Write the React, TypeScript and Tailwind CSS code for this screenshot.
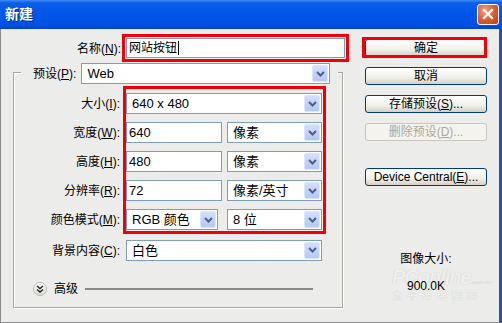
import React from 'react';

const Arrow = () => (
  <span className="w-[16px] h-[17px] mr-[1px] rounded-[2px] border border-[#dbe5fb] bg-[linear-gradient(to_bottom,#d3dffc,#b4c8f5)] flex items-center justify-center">
    <svg width="9" height="6" viewBox="0 0 9 6">
      <polyline points="1,1 4.5,4.5 8,1" fill="none" stroke="#4d6185" strokeWidth="2" />
    </svg>
  </span>
);

const Combo = ({ value, className }: { value: string; className: string }) => (
  <div className={`h-[21px] border border-[#7f9db9] bg-white flex items-center ${className}`}>
    <span className="flex-1 pl-[5px] text-[13px] leading-none whitespace-nowrap">{value}</span>
    <Arrow />
  </div>
);

const Field = ({ value, className }: { value: string; className: string }) => (
  <div className={`h-[21px] border border-[#7f9db9] bg-white flex items-center pl-[2px] text-[13px] leading-none ${className}`}>
    {value}
  </div>
);

const Label = ({ text, k, tail = ':' }: { text: string; k: string; tail?: string }) => (
  <span className="text-[12px] whitespace-nowrap">
    {text}(<span className="underline">{k}</span>){tail}
  </span>
);

const Btn = ({ children, disabled }: { children: React.ReactNode; disabled?: boolean }) => (
  <div
    className={`w-[122px] h-[18px] rounded-[3px] border flex items-center justify-center text-[12px] ${
      disabled
        ? 'border-[#c9c7ba] bg-[#f4f3ee] text-[#aca899]'
        : 'border-[#003c74] bg-[linear-gradient(to_bottom,#ffffff,#f0f0ea_60%,#d6d0c5)] text-black'
    }`}
  >
    {children}
  </div>
);

export default function App() {
  return (
    <div className="w-[502px] h-[323px] flex flex-col overflow-hidden text-black font-['Liberation_Sans','Noto_Sans_CJK_SC',sans-serif]">
      {/* title bar */}
      <div className="h-[29px] shrink-0 flex items-center justify-between pl-[5px] pr-[3px] bg-[linear-gradient(to_bottom,#3d8cf6_0%,#0b5fe9_10%,#0056e6_45%,#0052e2_85%,#0041cb_100%)]">
        <span className="text-white font-bold text-[14px] [text-shadow:1px_1px_0_#0b2a8f]">新建</span>
        <div className="w-[22px] h-[21px] mb-[1px] rounded-[3px] border border-white bg-[radial-gradient(circle_at_35%_30%,#f0a285,#d9572f_55%,#c23d16)] flex items-center justify-center">
          <svg width="12" height="12" viewBox="0 0 12 12">
            <path d="M2 2 L10 10 M10 2 L2 10" stroke="#fff" strokeWidth="2.2" strokeLinecap="square" />
          </svg>
        </div>
      </div>

      {/* body */}
      <div className="flex-1 flex bg-[#ececea] border-l border-b border-[#8c8c8c] border-r-[3px] border-r-[#2b4ea6] relative">
        {/* left */}
        <div className="w-[353px] shrink-0 flex flex-col">
          <div className="mt-[5px] flex items-center">
            <div className="w-[120px] text-right">
              <Label text="名称" k="N" />
            </div>
            <div className="ml-[1px] w-[227px] h-[28px] border-[3px] border-[#f0000b] p-[1px] flex">
              <div className="flex-1 border border-[#7f9db9] bg-white flex items-center pl-[2px] text-[12px]">
                网站按钮<span className="w-px h-[14px] bg-black ml-[1px]" />
              </div>
            </div>
          </div>

          {/* group box */}
          <div className="mt-[10px] ml-[12px] w-[330px] h-[236px] border border-[#a9a89f] shadow-[inset_1px_1px_0_#fff,1px_1px_0_#fff] flex flex-col">
            <div className="-mt-[10px] ml-[7px] w-[317px] h-[21px] bg-[#ececea] flex items-center pl-[12px]">
              <Label text="预设" k="P" />
              <Combo value="Web" className="ml-[5px] w-[249px]" />
            </div>

            <div className="mt-[2px] flex">
              <div className="w-[109px] pr-[3px] pt-[7px] flex flex-col gap-[8px]">
                <div className="h-[21px] flex items-center justify-end"><Label text="大小" k="I" /></div>
                <div className="h-[21px] flex items-center justify-end"><Label text="宽度" k="W" /></div>
                <div className="h-[21px] flex items-center justify-end"><Label text="高度" k="H" /></div>
                <div className="h-[21px] flex items-center justify-end"><Label text="分辨率" k="R" /></div>
                <div className="h-[21px] flex items-center justify-end"><Label text="颜色模式" k="M" /></div>
              </div>
              <div className="w-[203px] border-[3px] border-[#f0000b] pt-[4px] pb-[1px] flex flex-col gap-[8px]">
                <Combo value="640 x 480" className="w-[196px]" />
                <div className="flex gap-[5px]">
                  <Field value="640" className="w-[96px]" />
                  <Combo value="像素" className="w-[95px]" />
                </div>
                <div className="flex gap-[5px]">
                  <Field value="480" className="w-[96px]" />
                  <Combo value="像素" className="w-[95px]" />
                </div>
                <div className="flex gap-[5px]">
                  <Field value="72" className="w-[96px]" />
                  <Combo value="像素/英寸" className="w-[95px]" />
                </div>
                <div className="flex gap-[9px]">
                  <Combo value="RGB 颜色" className="w-[92px]" />
                  <Combo value="8 位" className="w-[95px]" />
                </div>
              </div>
            </div>

            <div className="mt-[4px] flex items-center">
              <div className="w-[109px] pr-[3px] text-right"><Label text="背景内容" k="C" /></div>
              <Combo value="白色" className="ml-[3px] w-[196px]" />
            </div>

            <div className="mt-[20px] ml-[19px] mr-[29px] h-[14px] flex items-center gap-[7px]">
              <span className="w-[14px] h-[14px] shrink-0 rounded-full border border-[#b8b8b0] bg-[linear-gradient(to_bottom,#ffffff,#dcdcd6)] flex items-center justify-center">
                <svg width="8" height="8" viewBox="0 0 8 8">
                  <polyline points="1,1 4,3.5 7,1" fill="none" stroke="#222" strokeWidth="1.4" />
                  <polyline points="1,4.5 4,7 7,4.5" fill="none" stroke="#222" strokeWidth="1.4" />
                </svg>
              </span>
              <span className="text-[12px] shrink-0">高级</span>
              <div className="grow h-[2px] bg-[#8a8a86]" />
            </div>
          </div>
        </div>

        {/* right */}
        <div className="flex-1 pl-[11px] pt-[10px] flex flex-col">
          <div className="relative">
            <Btn>确定</Btn>
            <span className="absolute -left-[3px] -top-[2px] w-[125px] h-[21px] border-[3px] border-[#f0000b]" />
          </div>
          <div className="mt-[10px]"><Btn>取消</Btn></div>
          <div className="mt-[10px]"><Btn><Label text="存储预设" k="S" tail="..." /></Btn></div>
          <div className="mt-[10px]"><Btn disabled><Label text="删除预设" k="D" tail="..." /></Btn></div>
          <div className="mt-[27px]"><Btn><span className="text-[12px]">Device Central(<span className="underline">E</span>)...</span></Btn></div>

          <div className="relative w-[122px] mt-[64px] flex flex-col items-center">
            <div className="absolute left-[27px] top-[17px] flex flex-col items-start select-none">
              <div className="flex items-end leading-none">
                <span className="text-[20px] font-bold italic tracking-[-1px] text-[#efefed] [text-shadow:0_0_1px_#c4c4c0]">PConline</span>
                <span className="text-[6px] text-[#d6d6d2] mb-[2px]">.com.cn</span>
              </div>
              <span className="mt-[1px] text-[10px] tracking-[5px] font-bold text-[#efefed] [text-shadow:0_0_1px_#c4c4c0]">太平洋电脑网</span>
            </div>
            <span className="relative text-[12px]">图像大小:</span>
            <span className="relative mt-[9px] text-[12px]">900.0K</span>
          </div>
        </div>
      </div>
    </div>
  );
}
